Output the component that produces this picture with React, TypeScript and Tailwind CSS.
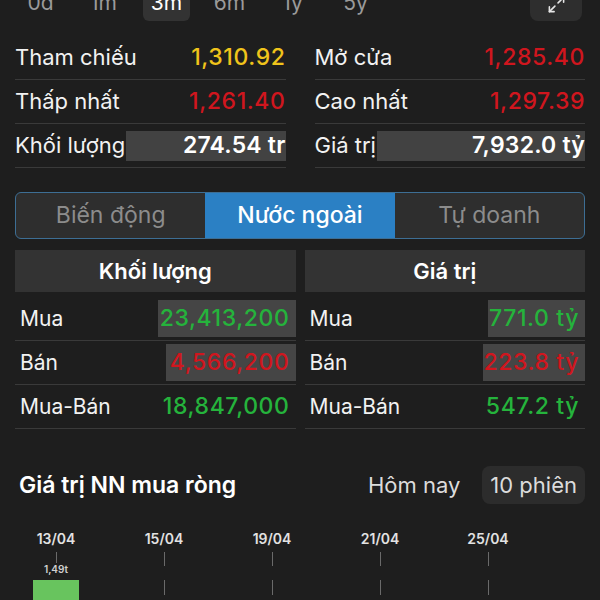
import { Maximize2 } from 'lucide-react';

const periods = ['0d', '1m', '3m', '6m', '1y', '5y'];

const RED = 'text-[#d0161e]';
const GREEN = 'text-[#25b33c]';

type Stat = { label: string; value: string; color: string; hl?: boolean };

const leftStats: Stat[] = [
  { label: 'Tham chiếu', value: '1,310.92', color: 'text-[#f0c41b]' },
  { label: 'Thấp nhất', value: '1,261.40', color: RED },
  { label: 'Khối lượng', value: '274.54 tr', color: 'text-white font-semibold', hl: true },
];

const rightStats: Stat[] = [
  { label: 'Mở cửa', value: '1,285.40', color: RED },
  { label: 'Cao nhất', value: '1,297.39', color: RED },
  { label: 'Giá trị', value: '7,932.0 tỷ', color: 'text-white font-semibold', hl: true },
];

type Flow = { label: string; value: string; color: string; hl?: string };

const volRows: Flow[] = [
  { label: 'Mua', value: '23,413,200', color: GREEN, hl: 'w-[138px]' },
  { label: 'Bán', value: '4,566,200', color: RED, hl: 'w-[130px]' },
  { label: 'Mua-Bán', value: '18,847,000', color: GREEN },
];

const valRows: Flow[] = [
  { label: 'Mua', value: '771.0 tỷ', color: GREEN, hl: 'w-[97px]' },
  { label: 'Bán', value: '223.8 tỷ', color: RED, hl: 'w-[102px]' },
  { label: 'Mua-Bán', value: '547.2 tỷ', color: GREEN },
];

const dates = ['13/04', '15/04', '19/04', '21/04', '25/04'];

function StatColumn({ rows }: { rows: Stat[] }) {
  return (
    <div className="flex flex-col">
      {rows.map(r => (
        <div key={r.label} className="h-[44px] flex items-center border-b border-[#3a3a3a]">
          <span className="text-[22px] text-[#f2f2f2] whitespace-nowrap">{r.label}</span>
          {r.hl ? (
            <span className={`flex-1 h-[30px] ml-[1px] bg-[#424242] flex items-center justify-end text-[23px] tracking-[0.2px] ${r.color}`}>
              {r.value}
            </span>
          ) : (
            <span className={`ml-auto text-[23px] font-medium tracking-[0.6px] ${r.color}`}>{r.value}</span>
          )}
        </div>
      ))}
    </div>
  );
}

function FlowColumn({ title, rows }: { title: string; rows: Flow[] }) {
  return (
    <div className="flex flex-col">
      <div className="h-[42px] bg-[#333333] flex items-center justify-center text-[22px] font-semibold text-white">
        {title}
      </div>
      <div className="h-[5px]" />
      {rows.map(r => (
        <div key={r.label} className="h-[44px] flex items-center border-b border-[#3a3a3a] pl-[5px]">
          <span className="text-[21px] text-[#f2f2f2] whitespace-nowrap">{r.label}</span>
          <span
            className={`ml-auto h-[37px] flex items-center justify-end pr-[6px] text-[23px] font-medium tracking-[0.6px] ${r.color} ${
              r.hl ? `${r.hl} bg-[#454545]` : ''
            }`}
          >
            {r.value}
          </span>
        </div>
      ))}
    </div>
  );
}

export default function App() {
  return (
    <div className="w-[600px] h-[600px] overflow-hidden bg-[#1e1e1e] font-['Inter','Liberation_Sans',sans-serif]">
      {/* thanh chọn kỳ */}
      <div className="-mt-[15px] h-[36px] flex items-stretch pl-[17px] pr-[18px]">
        <div className="flex gap-4">
          {periods.map(p => (
            <div
              key={p}
              className={`w-[47px] flex items-center justify-center rounded-md text-[21px] ${
                p === '3m' ? 'bg-[#333333] text-white' : 'text-[#9a9a9a]'
              }`}
            >
              {p}
            </div>
          ))}
        </div>
        <div className="ml-auto w-[52px] rounded-lg bg-[#2e2e2e] flex items-center justify-center">
          <Maximize2 size={19} strokeWidth={2} className="text-[#e6e6e6] mt-[2px]" />
        </div>
      </div>

      {/* thông số */}
      <div className="mt-[15px] px-[15px] grid grid-cols-2 gap-[29px]">
        <StatColumn rows={leftStats} />
        <StatColumn rows={rightStats} />
      </div>

      {/* tabs */}
      <div className="mt-[24px] mx-[15px] h-[47px] rounded-md border-[1.5px] border-[#3d6e94] bg-[#2e2e2e] flex overflow-hidden">
        <div className="flex-1 flex items-center justify-center text-[23px] text-[#8c8c8c]">Biến động</div>
        <div className="flex-1 flex items-center justify-center text-[23px] font-medium text-white bg-[#2b80c4]">
          Nước ngoài
        </div>
        <div className="flex-1 flex items-center justify-center text-[23px] text-[#8c8c8c]">Tự doanh</div>
      </div>

      {/* khối ngoại */}
      <div className="mt-[11px] px-[15px] grid grid-cols-2 gap-[9px]">
        <FlowColumn title="Khối lượng" rows={volRows} />
        <FlowColumn title="Giá trị" rows={valRows} />
      </div>

      {/* tiêu đề biểu đồ */}
      <div className="mt-[37px] pl-[19px] pr-[15px] h-[38px] flex items-center">
        <span className="text-[23px] font-semibold text-white">Giá trị NN mua ròng</span>
        <span className="ml-auto text-[22px] text-[#dcdcdc]">Hôm nay</span>
        <span className="ml-[22px] h-[38px] px-[8px] rounded-lg bg-[#2c2c2c] flex items-center text-[22px] text-[#dcdcdc]">
          10 phiên
        </span>
      </div>

      {/* biểu đồ */}
      <div className="mt-[25px] pl-[2px] flex">
        {dates.map((d, i) => (
          <div key={d} className="w-[108px] flex flex-col items-center">
            <span className="text-[14px] leading-[20px] font-semibold text-[#e2e2e2]">{d}</span>
            {i === 0 ? (
              <>
                <div className="mt-[3px] w-px h-[11px] bg-[#6a6a6a]" />
                <span className="text-[10px] leading-[12px] font-semibold text-[#d0d0d0]">1,49t</span>
                <div className="mt-[5px] w-[46px] h-[30px] bg-[#68c45e]" />
              </>
            ) : (
              <>
                <div className="mt-[3px] w-px h-[14px] bg-[#6a6a6a]" />
                <div className="mt-[14px] w-px h-[15px] bg-[#6a6a6a]" />
              </>
            )}
          </div>
        ))}
      </div>
    </div>
  );
}
